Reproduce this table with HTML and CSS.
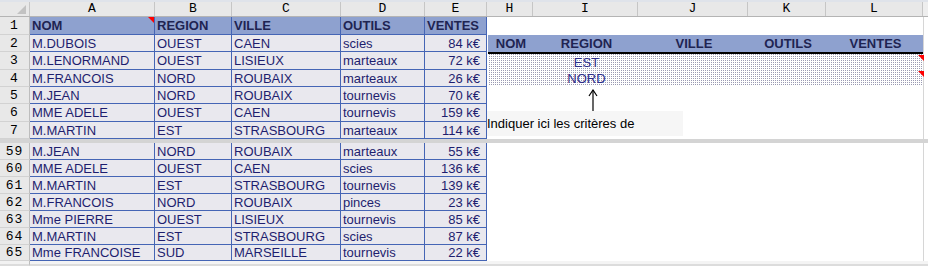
FILE: index.html
```html
<!DOCTYPE html>
<html>
<head>
<meta charset="utf-8">
<link rel="stylesheet" href="styles.css">
</head>
<body>
<div class="sheet">
  <div class="topstrip"></div>
  <div class="colheads">
    <div class="corner"><span class="corner-tri"></span></div>
    <div class="ch">A</div>
    <div class="ch">B</div>
    <div class="ch">C</div>
    <div class="ch">D</div>
    <div class="ch">E</div>
    <div class="ch">H</div>
    <div class="ch">I</div>
    <div class="ch">J</div>
    <div class="ch">K</div>
    <div class="ch">L</div>
    <div class="ch edge"></div>
  </div>

  <div class="pane pane-top">
    <div class="rblock">
      <div class="r-blank"></div>
      <div class="r-band">
        <span>NOM</span><span>REGION</span><span>VILLE</span><span>OUTILS</span><span>VENTES</span>
      </div>
      <div class="r-rule"></div>
      <div class="r-crit">
        <span></span><span class="crit">EST</span><span></span><span></span><span class="flag"></span>
        <span></span><span class="crit">NORD</span><span></span><span></span><span class="flag"></span>
      </div>
      <div class="r-note">
        <svg class="arrow" width="12" height="22" viewBox="0 0 12 22">
          <line x1="6" y1="1" x2="6" y2="22" stroke="#000" stroke-width="1.2"/>
          <polyline points="2,7 6,1 10,7" fill="none" stroke="#000" stroke-width="1.2"/>
        </svg>
        <div class="notebox">Indiquer ici les critères de</div>
      </div>
    </div>
    <div class="redge"></div>

    <div class="rh">1</div>
    <div class="c hd flagged">NOM</div><div class="c hd">REGION</div><div class="c hd">VILLE</div><div class="c hd">OUTILS</div><div class="c hd">VENTES</div>

    <div class="rh">2</div>
    <div class="c">M.DUBOIS</div><div class="c">OUEST</div><div class="c">CAEN</div><div class="c">scies</div><div class="c num">84 k€</div>
    <div class="rh">3</div>
    <div class="c">M.LENORMAND</div><div class="c">OUEST</div><div class="c">LISIEUX</div><div class="c">marteaux</div><div class="c num">72 k€</div>
    <div class="rh">4</div>
    <div class="c">M.FRANCOIS</div><div class="c">NORD</div><div class="c">ROUBAIX</div><div class="c">marteaux</div><div class="c num">26 k€</div>
    <div class="rh">5</div>
    <div class="c">M.JEAN</div><div class="c">NORD</div><div class="c">ROUBAIX</div><div class="c">tournevis</div><div class="c num">70 k€</div>
    <div class="rh">6</div>
    <div class="c">MME ADELE</div><div class="c">OUEST</div><div class="c">CAEN</div><div class="c">tournevis</div><div class="c num">159 k€</div>
    <div class="rh">7</div>
    <div class="c">M.MARTIN</div><div class="c">EST</div><div class="c">STRASBOURG</div><div class="c">marteaux</div><div class="c num">114 k€</div>
  </div>

  <div class="split"></div>

  <div class="pane pane-bottom">
    <div class="rblock white"></div>
    <div class="redge"></div>

    <div class="rh">59</div>
    <div class="c">M.JEAN</div><div class="c">NORD</div><div class="c">ROUBAIX</div><div class="c">marteaux</div><div class="c num">55 k€</div>
    <div class="rh">60</div>
    <div class="c">MME ADELE</div><div class="c">OUEST</div><div class="c">CAEN</div><div class="c">scies</div><div class="c num">136 k€</div>
    <div class="rh">61</div>
    <div class="c">M.MARTIN</div><div class="c">EST</div><div class="c">STRASBOURG</div><div class="c">tournevis</div><div class="c num">139 k€</div>
    <div class="rh">62</div>
    <div class="c">M.FRANCOIS</div><div class="c">NORD</div><div class="c">ROUBAIX</div><div class="c">pinces</div><div class="c num">23 k€</div>
    <div class="rh">63</div>
    <div class="c">Mme PIERRE</div><div class="c">OUEST</div><div class="c">LISIEUX</div><div class="c">tournevis</div><div class="c num">85 k€</div>
    <div class="rh">64</div>
    <div class="c">M.MARTIN</div><div class="c">EST</div><div class="c">STRASBOURG</div><div class="c">scies</div><div class="c num">87 k€</div>
    <div class="rh">65</div>
    <div class="c">Mme FRANCOISE</div><div class="c">SUD</div><div class="c">MARSEILLE</div><div class="c">tournevis</div><div class="c num">22 k€</div>
  </div>

  <div class="bottomstrip">
    <div class="bs-rh"></div>
    <div class="bs-rest"></div>
  </div>
</div>
</body>
</html>
```

FILE: styles.css
```css
* { box-sizing: border-box; }

html, body {
  margin: 0;
  padding: 0;
  background: #ffffff;
}

.sheet {
  width: 928px;
  height: 267px;
  overflow: hidden;
  font-family: "Liberation Sans", Arial, sans-serif;
  font-size: 13px;
  background: #ffffff;
}

.topstrip {
  height: 2px;
  background: #dfe3ea;
}

.colheads {
  display: grid;
  grid-template-columns: 30px 125px 77px 109px 84px 62px 46px 105px 110px 78px 97px 5px;
  height: 15px;
  background: #e8e8e8;
  border-bottom: 1px solid #b4b4b4;
}

.corner {
  position: relative;
  border-right: 1px solid #c6c6c6;
}

.corner-tri {
  position: absolute;
  right: 3px;
  bottom: 2px;
  width: 0;
  height: 0;
  border-bottom: 9px solid #c2c2c2;
  border-left: 9px solid transparent;
}

.ch {
  font-family: "Liberation Mono", "Courier New", monospace;
  font-size: 13px;
  line-height: 14px;
  text-align: center;
  color: #000;
  border-right: 1px solid #c6c6c6;
}

.ch.edge {
  border-right: none;
  background: #eeeeee;
}

.pane {
  display: grid;
  grid-template-columns: 30px 125px 77px 109px 84px 62px 436px 5px;
}

.pane-top {
  grid-template-rows: 18px 17px 18px 17px 17px 18px 17px;
}

.pane-bottom {
  grid-template-rows: repeat(6, 17px) 16px;
}

.rh {
  font-family: "Liberation Mono", "Courier New", monospace;
  font-size: 13px;
  letter-spacing: 1px;
  background: #e8e8e8;
  color: #000;
  border-right: 1px solid #bdbdbd;
  border-bottom: 1px solid #d2d2d2;
  display: flex;
  align-items: center;
  justify-content: center;
}

.c {
  background: #e9e8ee;
  color: #1e1e6e;
  border-right: 1px solid #4565b5;
  border-bottom: 1px solid #4565b5;
  padding-left: 2px;
  white-space: nowrap;
  overflow: hidden;
  display: flex;
  align-items: center;
}

.c.hd {
  background: #8ea1cf;
  color: #1f2452;
  font-weight: bold;
}

.c.num {
  justify-content: flex-end;
  padding-right: 6px;
}

.flagged {
  position: relative;
  overflow: visible;
}

.flagged::after {
  content: "";
  position: absolute;
  top: 0;
  right: 0;
  width: 0;
  height: 0;
  border-top: 6px solid #ff0000;
  border-left: 6px solid transparent;
}

.rblock {
  grid-column: 7;
  grid-row: 1 / span 7;
  display: flex;
  flex-direction: column;
  background: #ffffff;
}

.redge {
  grid-column: 8;
  grid-row: 1 / span 7;
  background: #ffffff;
  border-left: 1px solid #d6d6d6;
}

.r-blank {
  height: 18px;
}

.r-band {
  height: 17px;
  background: #8ea1cf;
  display: grid;
  grid-template-columns: 46px 105px 110px 78px 97px;
  align-items: center;
  font-weight: bold;
  color: #1f2452;
  text-align: center;
  margin-left: 1px;
}

.r-rule {
  height: 2px;
  background: #000000;
  margin-left: 1px;
}

.r-crit {
  height: 32px;
  display: grid;
  grid-template-columns: 46px 105px 110px 78px 97px;
  grid-template-rows: 16px 16px;
  margin-left: 1px;
  background-color: #ffffff;
  background-image: conic-gradient(#9a9ab2 0 25%, transparent 0 100%);
  background-size: 2px 2px;
}

.r-crit span {
  display: flex;
  align-items: center;
  justify-content: center;
  position: relative;
}

.crit {
  color: #2c2c8a;
}

.flag::after {
  content: "";
  position: absolute;
  top: 1px;
  right: 0;
  width: 0;
  height: 0;
  border-top: 6px solid #ff0000;
  border-left: 6px solid transparent;
}

.r-note {
  flex: 1;
  display: flex;
  flex-direction: column;
  padding-top: 3px;
}

.arrow {
  display: block;
  margin-left: 100px;
}

.notebox {
  width: 196px;
  height: 25px;
  background: #f6f6f6;
  color: #000;
  font-size: 13px;
  line-height: 25px;
  white-space: nowrap;
}

.split {
  height: 4px;
  background: #d4d4d4;
}

.pane-bottom .rblock.white {
  display: block;
}

.bottomstrip {
  display: flex;
  height: 5px;
}

.bs-rh {
  width: 30px;
  background: #f2f2f2;
  border-right: 1px solid #bdbdbd;
  border-bottom: 2px solid #dcdcdc;
}

.bs-rest {
  flex: 1;
  background: #f4f4f4;
  border-bottom: 2px solid #dcdcdc;
}
```
